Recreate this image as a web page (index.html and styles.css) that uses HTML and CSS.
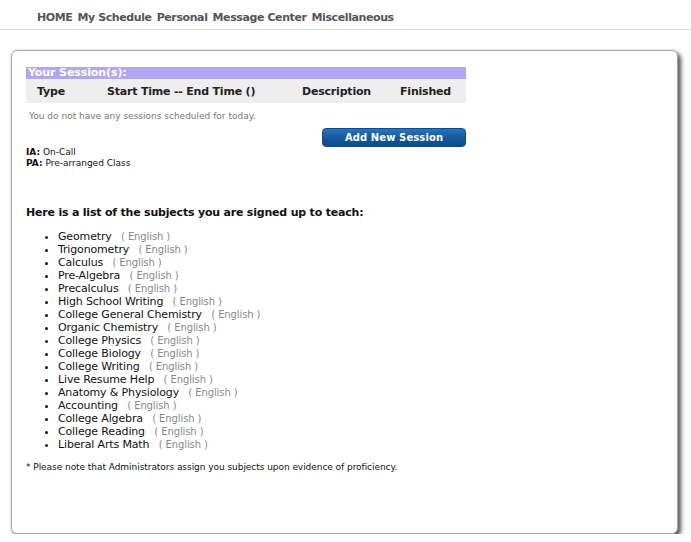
FILE: index.html
```html
<!DOCTYPE html>
<html>
<head>
<meta charset="utf-8">
<link rel="stylesheet" href="styles.css">
</head>
<body>
<nav class="topnav">
  <a>HOME</a><a>My Schedule</a><a>Personal</a><a>Message Center</a><a>Miscellaneous</a>
</nav>
<main class="panel">
  <section class="sessions">
    <div class="sessions-title">Your Session(s):</div>
    <div class="sessions-head">
      <span class="c-type">Type</span>
      <span class="c-time">Start Time -- End Time ()</span>
      <span class="c-desc">Description</span>
      <span class="c-fin">Finished</span>
    </div>
    <p class="empty">You do not have any sessions scheduled for today.</p>
    <div class="btn-row"><button class="btn">Add New Session</button></div>
  </section>
  <div class="legend">
    <div><b>IA:</b> On-Call</div>
    <div><b>PA:</b> Pre-arranged Class</div>
  </div>
  <h2 class="subj-title">Here is a list of the subjects you are signed up to teach:</h2>
  <ul class="subjects">
    <li>Geometry <span class="lang">( English )</span></li>
    <li>Trigonometry <span class="lang">( English )</span></li>
    <li>Calculus <span class="lang">( English )</span></li>
    <li>Pre-Algebra <span class="lang">( English )</span></li>
    <li>Precalculus <span class="lang">( English )</span></li>
    <li>High School Writing <span class="lang">( English )</span></li>
    <li>College General Chemistry <span class="lang">( English )</span></li>
    <li>Organic Chemistry <span class="lang">( English )</span></li>
    <li>College Physics <span class="lang">( English )</span></li>
    <li>College Biology <span class="lang">( English )</span></li>
    <li>College Writing <span class="lang">( English )</span></li>
    <li>Live Resume Help <span class="lang">( English )</span></li>
    <li>Anatomy &amp; Physiology <span class="lang">( English )</span></li>
    <li>Accounting <span class="lang">( English )</span></li>
    <li>College Algebra <span class="lang">( English )</span></li>
    <li>College Reading <span class="lang">( English )</span></li>
    <li>Liberal Arts Math <span class="lang">( English )</span></li>
  </ul>
  <p class="note">* Please note that Administrators assign you subjects upon evidence of proficiency.</p>
</main>
</body>
</html>
```
FILE: styles.css
```css
html, body {
  margin: 0;
  padding: 0;
  background: #ffffff;
  font-family: "DejaVu Sans", Verdana, sans-serif;
  color: #111;
}
.topnav {
  height: 30px;
  box-sizing: border-box;
  border-bottom: 1px solid #dcdcdc;
  padding: 11px 0 0 37px;
  display: flex;
  gap: 5px;
  font-size: 11px;
  font-weight: bold;
  letter-spacing: -0.4px;
  color: #555;
  line-height: 14px;
}
.topnav a { color: #555; }
.panel {
  margin: 20px 13px 0 11px;
  height: 484px;
  box-sizing: border-box;
  border: 1px solid #a8a8a8;
  border-radius: 6px;
  box-shadow: 3px 3px 4px #555, 0 0 3px rgba(0,0,0,0.12);
  padding: 16px 15px 0 14px;
  background: #fff;
}
.sessions { width: 440px; }
.sessions-title {
  background: #b2a6f2;
  color: #fff;
  font-size: 11px;
  font-weight: bold;
  letter-spacing: -0.1px;
  height: 12px;
  line-height: 12px;
  padding-left: 2px;
}
.sessions-head {
  background: #eeeeee;
  height: 24px;
  display: flex;
  align-items: center;
  font-size: 11px;
  font-weight: bold;
  letter-spacing: -0.2px;
  color: #222;
}
.c-type { width: 70px; padding-left: 11px; }
.c-time { width: 195px; }
.c-desc { width: 98px; }
.empty {
  margin: 7px 0 0 3px;
  font-size: 9px;
  line-height: 12px;
  color: #777;
}
.btn-row { display: flex; justify-content: flex-end; margin-top: 6px; }
.btn {
  width: 144px;
  height: 19px;
  border: 1px solid #0d4a88;
  border-radius: 4px;
  background: linear-gradient(#2a74bb, #145a9e 50%, #0c4b8c);
  color: #fff;
  font-family: "DejaVu Sans", Verdana, sans-serif;
  font-size: 10px;
  font-weight: bold;
  letter-spacing: 0.1px;
  padding: 0;
  line-height: 17px;
}
.legend {
  margin-top: 0;
  font-size: 9px;
  line-height: 11px;
  color: #111;
}
.subj-title {
  margin: 37px 0 0 0;
  font-size: 11px;
  line-height: 14px;
  font-weight: bold;
  letter-spacing: -0.2px;
  color: #111;
}
.subjects {
  margin: 10px 0 0 0;
  padding-left: 32px;
  font-size: 11px;
  letter-spacing: -0.15px;
  line-height: 13px;
  color: #111;
}
.lang {
  font-size: 10px;
  letter-spacing: -0.1px;
  color: #888;
  margin-left: 6px;
}
.note {
  margin: 11px 0 0 0;
  font-size: 9px;
  letter-spacing: -0.05px;
  line-height: 11px;
  color: #111;
}
```
